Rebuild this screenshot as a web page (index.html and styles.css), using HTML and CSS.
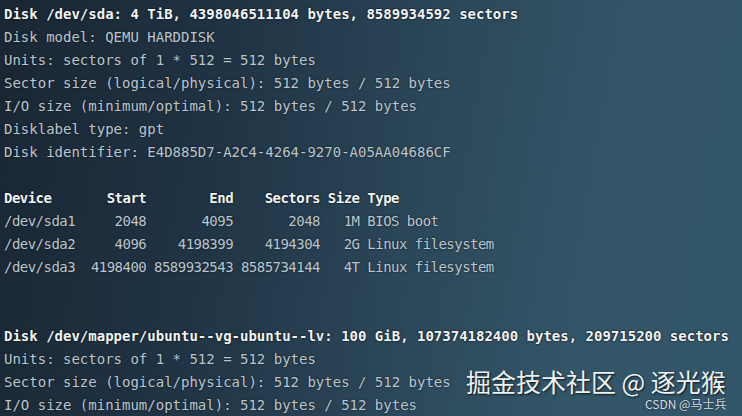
FILE: index.html
```
<!DOCTYPE html>
<html lang="en">
<head>
  <meta charset="UTF-8">
  <title>fdisk -l</title>
  <link rel="stylesheet" href="styles.css">
</head>
<body>

  <div class="terminal">
    <div class="line bold">Disk /dev/sda: 4 TiB, 4398046511104 bytes, 8589934592 sectors</div>
    <div class="line">Disk model: QEMU HARDDISK</div>
    <div class="line">Units: sectors of 1 * 512 = 512 bytes</div>
    <div class="line">Sector size (logical/physical): 512 bytes / 512 bytes</div>
    <div class="line">I/O size (minimum/optimal): 512 bytes / 512 bytes</div>
    <div class="line">Disklabel type: gpt</div>
    <div class="line">Disk identifier: E4D885D7-A2C4-4264-9270-A05AA04686CF</div>
    <div class="line"> </div>

    <!-- partition table -->
    <div class="line table bold">Device       Start        End    Sectors Size Type</div>
    <div class="line table">/dev/sda1     2048       4095       2048   1M BIOS boot</div>
    <div class="line table">/dev/sda2     4096    4198399    4194304   2G Linux filesystem</div>
    <div class="line table">/dev/sda3  4198400 8589932543 8585734144   4T Linux filesystem</div>
    <div class="line"> </div>
    <div class="line"> </div>

    <div class="line bold">Disk /dev/mapper/ubuntu--vg-ubuntu--lv: 100 GiB, 107374182400 bytes, 209715200 sectors</div>
    <div class="line">Units: sectors of 1 * 512 = 512 bytes</div>
    <div class="line">Sector size (logical/physical): 512 bytes / 512 bytes</div>
    <div class="line">I/O size (minimum/optimal): 512 bytes / 512 bytes</div>
  </div>

  <div class="watermark">掘金技术社区 @ 逐光猴</div>
  <div class="credit">CSDN @马士兵</div>

</body>
</html>
```

FILE: styles.css
```
html, body {
  height: 100%;
}
body {
  margin: 0;
  overflow: hidden;
  position: relative;
  background: linear-gradient(100deg, #1a2632 0%, #203445 30%, #2b4759 55%, #335568 78%, #32566a 100%);
  font-family: "DejaVu Sans Mono", "Liberation Mono", monospace;
}
.terminal {
  padding: 3px 0 0 4px;
}
.line {
  font-size: 14px;
  line-height: 23px;
  height: 23px;
  white-space: pre;
  color: #bcc5cc;
  text-shadow: 0 0 2px rgba(10, 20, 28, 0.8);
}
.bold {
  color: #f2f4f5;
  font-weight: bold;
  text-shadow: 0 0 2px #0c141a, 0 0 1px #0c141a;
}
.table {
  letter-spacing: -0.53px;
}
.watermark {
  position: absolute;
  left: 466px;
  top: 366px;
  font-family: "Noto Sans CJK SC", "Noto Sans", sans-serif;
  font-size: 25px;
  line-height: 30px;
  color: #eef2f3;
  text-shadow: 1px 1px 2px rgba(0, 0, 0, 0.75);
}
.credit {
  position: absolute;
  left: 645px;
  top: 396px;
  font-family: "Noto Sans CJK SC", "Noto Sans", sans-serif;
  font-size: 12px;
  line-height: 16px;
  color: #d8dee1;
  text-shadow: 0 0 2px rgba(0, 0, 0, 0.6);
}
```
